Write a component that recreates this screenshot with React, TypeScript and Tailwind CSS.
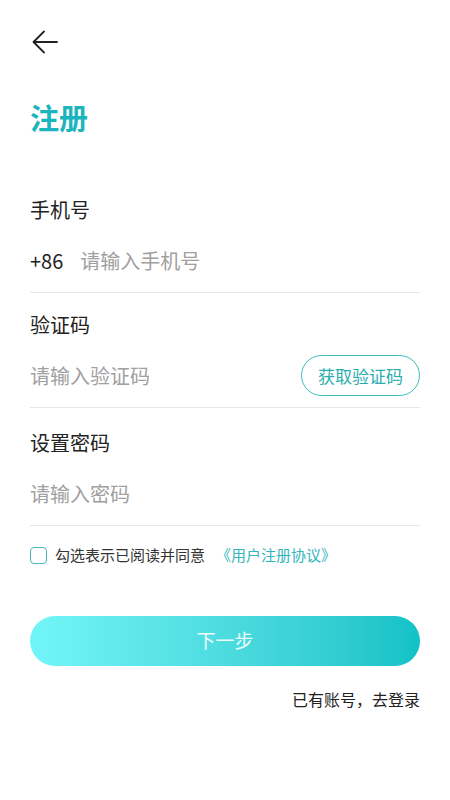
import React from 'react';

const FONT = { fontFamily: '"Noto Sans CJK SC", "Noto Sans", sans-serif' };

function Field({ label, children, className = '' }: { label: string; children: React.ReactNode; className?: string }) {
  return (
    <div className={className}>
      <div className="h-[28px] text-[20px] leading-[28px] text-[#222]">{label}</div>
      <div className="mt-[5px] h-[64px] flex items-center border-b border-[#e6e6e6]">{children}</div>
    </div>
  );
}

export default function App() {
  return (
    <div className="w-[450px] h-[800px] bg-white px-[30px]" style={FONT}>
      {/* Back */}
      <div className="pt-[30px] h-[54px]">
        <svg width="28" height="24" viewBox="0 0 28 24">
          <path d="M27 12H4M14 1.5L3.5 12L14 22.5" fill="none" stroke="#222" strokeWidth="1.8" strokeLinecap="round" strokeLinejoin="round" />
        </svg>
      </div>

      <h1 className="mt-[43px] text-[29px] leading-[40px] font-bold text-[#1cb5bd]">注册</h1>

      <Field label="手机号" className="mt-[59px]">
        <span className="text-[20px] text-[#222] mr-[17px]">+86</span>
        <span className="text-[20px] text-[#a0a0a0]">请输入手机号</span>
      </Field>

      <Field label="验证码" className="mt-[18px]">
        <span className="flex-1 text-[20px] text-[#a0a0a0]">请输入验证码</span>
        <button className="h-[41px] w-[119px] rounded-full border-[1.5px] border-[#3dbdbd] text-[17px] text-[#2aaeae] flex items-center justify-center">
          获取验证码
        </button>
      </Field>

      <Field label="设置密码" className="mt-[21px]">
        <span className="text-[20px] text-[#a0a0a0]">请输入密码</span>
      </Field>

      <div className="mt-[18px] flex items-center">
        <div className="w-[17px] h-[17px] rounded-[4px] border-[1.5px] border-[#48b9bb]" />
        <span className="ml-[8px] text-[15px] text-[#333]">勾选表示已阅读并同意</span>
        <span className="ml-[11px] text-[15px] text-[#32b5bb]">《用户注册协议》</span>
      </div>

      <button className="mt-[49px] w-full h-[50px] rounded-full bg-gradient-to-r from-[#72f5f8] to-[#10c2c7] text-white/90 text-[19px] flex items-center justify-center">
        下一步
      </button>

      <div className="mt-[21px] text-right text-[16px] text-[#222]">已有账号，去登录</div>
    </div>
  );
}
